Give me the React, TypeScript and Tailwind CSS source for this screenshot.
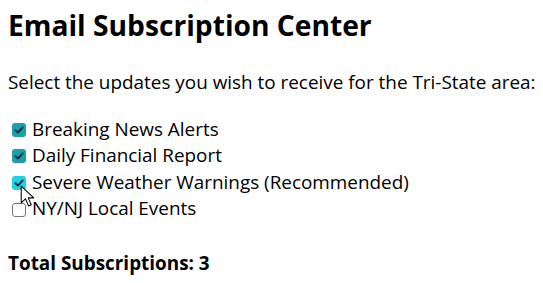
import React, { useState } from 'react';

interface Topic {
    id: string;
    label: string;
    checked: boolean;
    hover?: boolean;
}

const initialTopics: Topic[] = [
    { id: 'breaking', label: 'Breaking News Alerts', checked: true },
    { id: 'financial', label: 'Daily Financial Report', checked: true },
    { id: 'weather', label: 'Severe Weather Warnings (Recommended)', checked: true, hover: true },
    { id: 'events', label: 'NY/NJ Local Events', checked: false },
];

const Box: React.FC<{ checked: boolean; hover?: boolean }> = ({ checked, hover }) => {
    if (!checked) {
        return (
            <span className="ml-[4px] mr-[6px] mt-[2px] block h-[14px] w-[14px] shrink-0 rounded-[3px] border border-[#767676] bg-white" />
        );
    }
    return (
        <span
            className={`ml-[4px] mr-[6px] mt-[2px] flex h-[14px] w-[14px] shrink-0 items-center justify-center rounded-[3px] ${hover ? 'bg-[#1fd3e4]' : 'bg-[#1a9fad]'}`}
        >
            <svg width="10" height="10" viewBox="0 0 10 10" fill="none">
                <path d="M1.5 5.2 L4 7.6 L8.6 2.4" stroke="#0f2a3a" strokeWidth="1.9" strokeLinecap="round" strokeLinejoin="round" />
            </svg>
        </span>
    );
};

const App: React.FC = () => {
    const [topics, setTopics] = useState<Topic[]>(initialTopics);

    const toggle = (id: string) => {
        setTopics(topics.map((t) => (t.id === id ? { ...t, checked: !t.checked } : t)));
    };

    const total = topics.filter((t) => t.checked).length;

    return (
        <div className="relative min-h-[283px] bg-white px-[8px] pt-[5px] font-['Segoe_UI','Open_Sans',sans-serif] text-[18.9px] leading-[26.6px] text-black">
            <h2 className="mb-[24px] text-[28.2px] font-bold leading-[40px]">Email Subscription Center</h2>
            <p className="mb-[20px] whitespace-nowrap">Select the updates you wish to receive for the Tri-State area:</p>
            <div>
                {topics.map((t) => (
                    <label key={t.id} className="flex cursor-default items-center" onClick={() => toggle(t.id)}>
                        <Box checked={t.checked} hover={t.hover} />
                        <span>{t.label}</span>
                    </label>
                ))}
            </div>
            <p className="mt-[28px] font-bold">Total Subscriptions: {total}</p>

            {/* mouse pointer over the hovered checkbox */}
            <svg className="absolute left-[20px] top-[185px]" width="15" height="23" viewBox="0 0 14 22">
                <path
                    d="M1 1 L1 17 L5 13.2 L8 20 L10.6 18.9 L7.7 12.3 L13 12.3 Z"
                    fill="#fff"
                    stroke="#000"
                    strokeWidth="1"
                    strokeLinejoin="round"
                />
            </svg>
        </div>
    );
};

export default App;
